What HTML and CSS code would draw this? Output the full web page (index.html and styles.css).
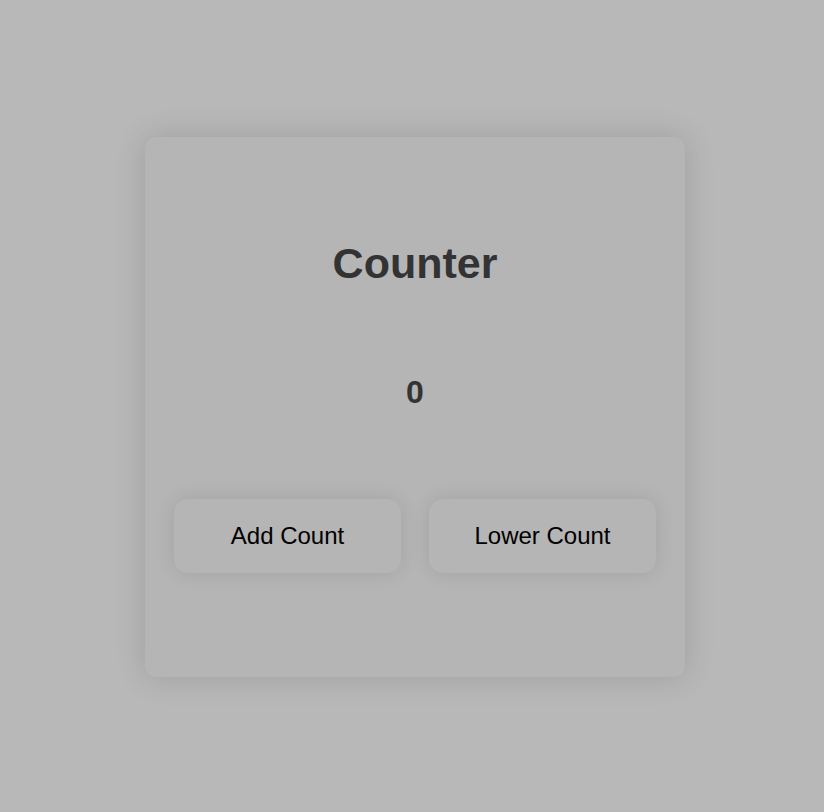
FILE: index.html
```html
<!DOCTYPE html>
<html>
<head>
<meta charset="utf-8">
<link rel="stylesheet" href="styles.css">
</head>
<body>
<div class="page">
  <div class="card">
    <h1 class="title">Counter</h1>
    <div class="count">0</div>
    <div class="buttons">
      <button class="btn">Add Count</button>
      <button class="btn">Lower Count</button>
    </div>
  </div>
</div>
</body>
</html>
```
FILE: styles.css
```css
html, body {
  margin: 0;
  padding: 0;
  background: #b8b8b8;
  font-family: "Liberation Sans", Arial, sans-serif;
}
.page {
  min-height: 812px;
  display: flex;
  align-items: center;
  justify-content: center;
  padding-left: 6px;
  padding-top: 2px;
  box-sizing: border-box;
}
.card {
  width: 540px;
  height: 540px;
  box-sizing: border-box;
  background: #b5b5b5;
  border-radius: 12px;
  box-shadow: 0 0 32px rgba(0, 0, 0, 0.14);
  padding: 0 29px;
  display: flex;
  flex-direction: column;
  align-items: center;
}
.title {
  margin: 102px 0 0;
  font-size: 43px;
  line-height: 49px;
  font-weight: bold;
  color: #333333;
}
.count {
  margin-top: 86px;
  font-size: 32px;
  line-height: 37px;
  font-weight: bold;
  color: #333333;
}
.buttons {
  margin-top: 88px;
  display: flex;
  gap: 28px;
  width: 100%;
}
.btn {
  flex: 1;
  height: 74px;
  border: none;
  border-radius: 14px;
  background: #b5b5b5;
  box-shadow: 0 0 20px rgba(0, 0, 0, 0.1);
  font-family: "Liberation Sans", Arial, sans-serif;
  font-size: 24px;
  color: #000;
  cursor: pointer;
}
```
